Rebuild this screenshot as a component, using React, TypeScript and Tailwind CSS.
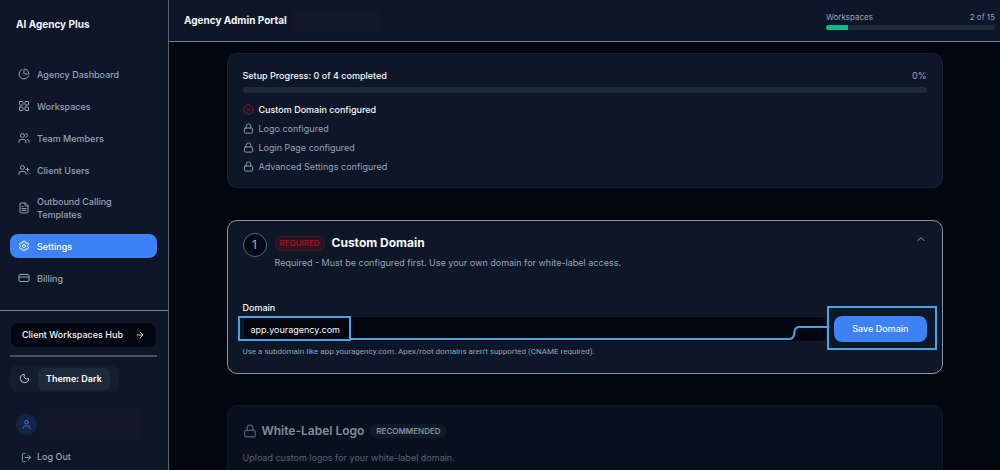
import React, { useState } from "react";
import {
  ArrowRight,
  ChartPie,
  ChevronUp,
  CircleX,
  CreditCard,
  FileText,
  LayoutGrid,
  Lock,
  LogOut,
  LucideIcon,
  Moon,
  Settings,
  User,
  UserPlus,
  Users
} from "lucide-react";
import clsx from "clsx";

const navItems: { label: string; icon: LucideIcon }[] = [
  { label: "Agency Dashboard", icon: ChartPie },
  { label: "Workspaces", icon: LayoutGrid },
  { label: "Team Members", icon: Users },
  { label: "Client Users", icon: UserPlus },
  { label: "Outbound Calling Templates", icon: FileText },
  { label: "Settings", icon: Settings },
  { label: "Billing", icon: CreditCard }
];

const steps = [
  { label: "Custom Domain configured", locked: false },
  { label: "Logo configured", locked: true },
  { label: "Login Page configured", locked: true },
  { label: "Advanced Settings configured", locked: true }
];

const Sidebar = () => {
  const [active, setActive] = useState("Settings");
  return (
    <aside className="flex w-[169px] shrink-0 flex-col border-r border-[#5b626e] bg-[#0e1727]">
      <div className="px-4 pt-4 text-[10px] leading-4 font-bold text-slate-100">AI Agency Plus</div>
      <nav className="mt-[30px] flex flex-col gap-2 pr-[11px] pl-[10px]">
        {navItems.map(({ label, icon: Icon }) => (
          <a
            key={label}
            href="#"
            onClick={() => setActive(label)}
            className={clsx(
              "flex min-h-6 items-center gap-[7px] rounded-lg px-2 py-[5px] text-[9px] leading-[13px] font-medium",
              active === label ? "bg-[#3c82f6] text-white" : "text-[#94a3b8]"
            )}
          >
            <Icon className="size-3 shrink-0" />
            {label}
          </a>
        ))}
      </nav>
      <div className="mt-auto border-t border-[#7b8493] pt-[11px] pr-[11px] pb-[6px] pl-[10px]">
        <button className="flex h-[26px] w-full items-center justify-between rounded-lg border border-[#111a2b] bg-[#020611] px-[11px] text-[9px] font-medium text-slate-100">
          Client Workspaces Hub
          <ArrowRight className="size-[10px]" />
        </button>
        <div className="mt-[7px] h-[2px] bg-[#475060]" />
        <button className="mt-2 flex h-[27px] items-center gap-2 rounded-lg bg-[#141d2d] pr-[9px] pl-[9px] text-[9px] font-semibold text-white">
          <Moon className="size-[11px] text-slate-300" />
          <span className="rounded-md bg-[#1e293b] px-2 py-1 leading-[14px]">Theme: Dark</span>
        </button>
        <div className="mt-4 flex items-center gap-1 pl-[6px]">
          <div className="flex size-[21px] items-center justify-center rounded-full bg-[#132545]">
            <User className="size-[11px] text-[#3b7ae6]" />
          </div>
          <div className="h-[33px] w-[100px] bg-[#12172a]" />
        </div>
        <button className="mt-[9px] flex items-center gap-[5px] pl-[11px] text-[9px] leading-[14px] font-medium text-[#94a3b8]">
          <LogOut className="size-[11px]" />
          Log Out
        </button>
      </div>
    </aside>
  );
};

const Header = () => (
  <header className="flex h-[42px] shrink-0 items-center border-b border-[#7b8493] bg-[#0e1727] pr-[5px] pl-[15px]">
    <h1 className="text-[10px] font-bold text-slate-100">Agency Admin Portal</h1>
    <div className="ml-[6px] h-[22px] w-[88px] bg-[#10182b]" />
    <div className="ml-auto w-[169px] text-[8px] leading-3 text-[#94a3b8]">
      <div className="flex justify-between">
        <span>Workspaces</span>
        <span>2 of 15</span>
      </div>
      <div className="mt-[2px] h-[5px] overflow-hidden rounded-full bg-[#1e293b]">
        <div className="h-full w-[13.3%] bg-[#10b981]" />
      </div>
    </div>
  </header>
);

const SetupProgress = () => (
  <section className="rounded-[10px] border border-[#182233] bg-[#0e1727] px-[15px] pt-[14px] pb-[13px] text-[9px]">
    <div className="flex justify-between leading-4">
      <h2 className="font-medium text-slate-50">Setup Progress: 0 of 4 completed</h2>
      <span className="text-[#94a3b8]">0%</span>
    </div>
    <div className="mt-[3px] h-[6px] rounded-full bg-[#1e293b]" />
    <ul className="mt-[9px] flex flex-col gap-1 leading-[15px]">
      {steps.map(step => (
        <li key={step.label} className={clsx("flex items-center gap-[5px]", step.locked ? "text-[#94a3b8]" : "font-medium text-slate-50")}>
          {step.locked
            ? <Lock className="size-[11px]" />
            : <CircleX className="size-[11px] text-[#8b1d22]" />
          }
          {step.label}
        </li>
      ))}
    </ul>
  </section>
);

const CustomDomain = () => {
  const [domain, setDomain] = useState("app.youragency.com");
  return (
    <section className="mt-8 rounded-[10px] border border-[#8d949f] bg-[#0e1727] px-[15px] pt-[11px] pb-[15px]">
      <div className="flex items-start">
        <div className="mt-px flex size-6 items-center justify-center rounded-full border border-[#5b6471] bg-[#040913] text-[12px] text-[#9fb0c3]">1</div>
        <div className="ml-2 flex-1">
          <div className="flex items-center gap-[7px]">
            <span className="rounded-full border border-[#4a1523] bg-[#2c1322] px-1 text-[8px] leading-[13px] font-medium text-[#b4121b]">REQUIRED</span>
            <h2 className="text-[12px] leading-[22px] font-bold text-slate-50">Custom Domain</h2>
          </div>
          <p className="mt-px text-[9px] leading-4 text-[#94a3b8]">
            Required - Must be configured first. Use your own domain for white-label access.
          </p>
        </div>
        <button aria-label="Collapse" className="mt-[1px] text-[#94a3b8]">
          <ChevronUp className="size-3" />
        </button>
      </div>
      <label htmlFor="domain" className="mt-[29px] block text-[9px] leading-4 font-medium text-slate-50">Domain</label>
      <div className="flex items-center gap-[7px]">
        <div className="relative flex-1">
          <input
            id="domain"
            value={domain}
            onChange={e => setDomain(e.target.value)}
            className="block h-[26px] w-full rounded-md border border-[#141c2a] bg-[#020611] px-[7px] text-[9px] text-slate-50 outline-none"
          />
          {/* highlight around the value, joined to the save button */}
          <div className="pointer-events-none absolute top-0 -left-[5px] h-[25px] w-[113px] border-2 border-[#45a5e3]" />
          <div className="pointer-events-none absolute top-[10px] right-0 left-[108px] flex h-[14px] items-end">
            <div className="h-[2px] flex-1 bg-[#45a5e3]" />
            <svg width="40" height="14" viewBox="0 0 40 14" fill="none" stroke="#45a5e3" strokeWidth="2">
              <path d="M0 13H2C5 13 6.500 11.500 7 8.500L7.500 5.500C8 2.500 9.500 1 12.500 1H40" />
            </svg>
          </div>
        </div>
        <div className="relative">
          <button className="block h-[26px] rounded-lg bg-[#3c82f6] px-[18px] text-[9px] font-medium text-slate-50">Save Domain</button>
          <div className="pointer-events-none absolute -top-[10px] -right-[10px] -bottom-2 -left-[7px] border-2 border-[#45a5e3]" />
        </div>
      </div>
      <p className="mt-1 font-['Roboto',sans-serif] text-[8px] leading-3 text-[#94a3b8]">
        Use a subdomain like app.youragency.com. Apex/root domains aren't supported (CNAME required).
      </p>
    </section>
  );
};

const WhiteLabelLogo = () => (
  <section className="mt-[31px] rounded-[10px] border border-[#101827] bg-[#09101d] px-[15px] pt-[15px] pb-8">
    <div className="flex items-center">
      <Lock className="size-[14px] text-[#566070]" />
      <h2 className="ml-[5px] text-[12px] leading-5 font-semibold text-[#858c96]">White-Label Logo</h2>
      <span className="ml-[6px] rounded-full bg-[#111a27] px-[6px] text-[8px] leading-[14px] font-semibold text-[#858c96]">RECOMMENDED</span>
    </div>
    <p className="mt-[9px] text-[9px] leading-4 text-[#566173]">Upload custom logos for your white-label domain.</p>
  </section>
);

const App = () => (
  <div className="flex h-screen overflow-hidden bg-[#020611] font-['Inter',sans-serif]">
    <Sidebar />
    <div className="flex min-w-0 flex-1 flex-col">
      <Header />
      <main className="flex-1 overflow-hidden px-4 pt-[11px]">
        <div className="mx-auto max-w-[716px]">
          <SetupProgress />
          <CustomDomain />
          <WhiteLabelLogo />
        </div>
      </main>
    </div>
  </div>
);

export default App;
